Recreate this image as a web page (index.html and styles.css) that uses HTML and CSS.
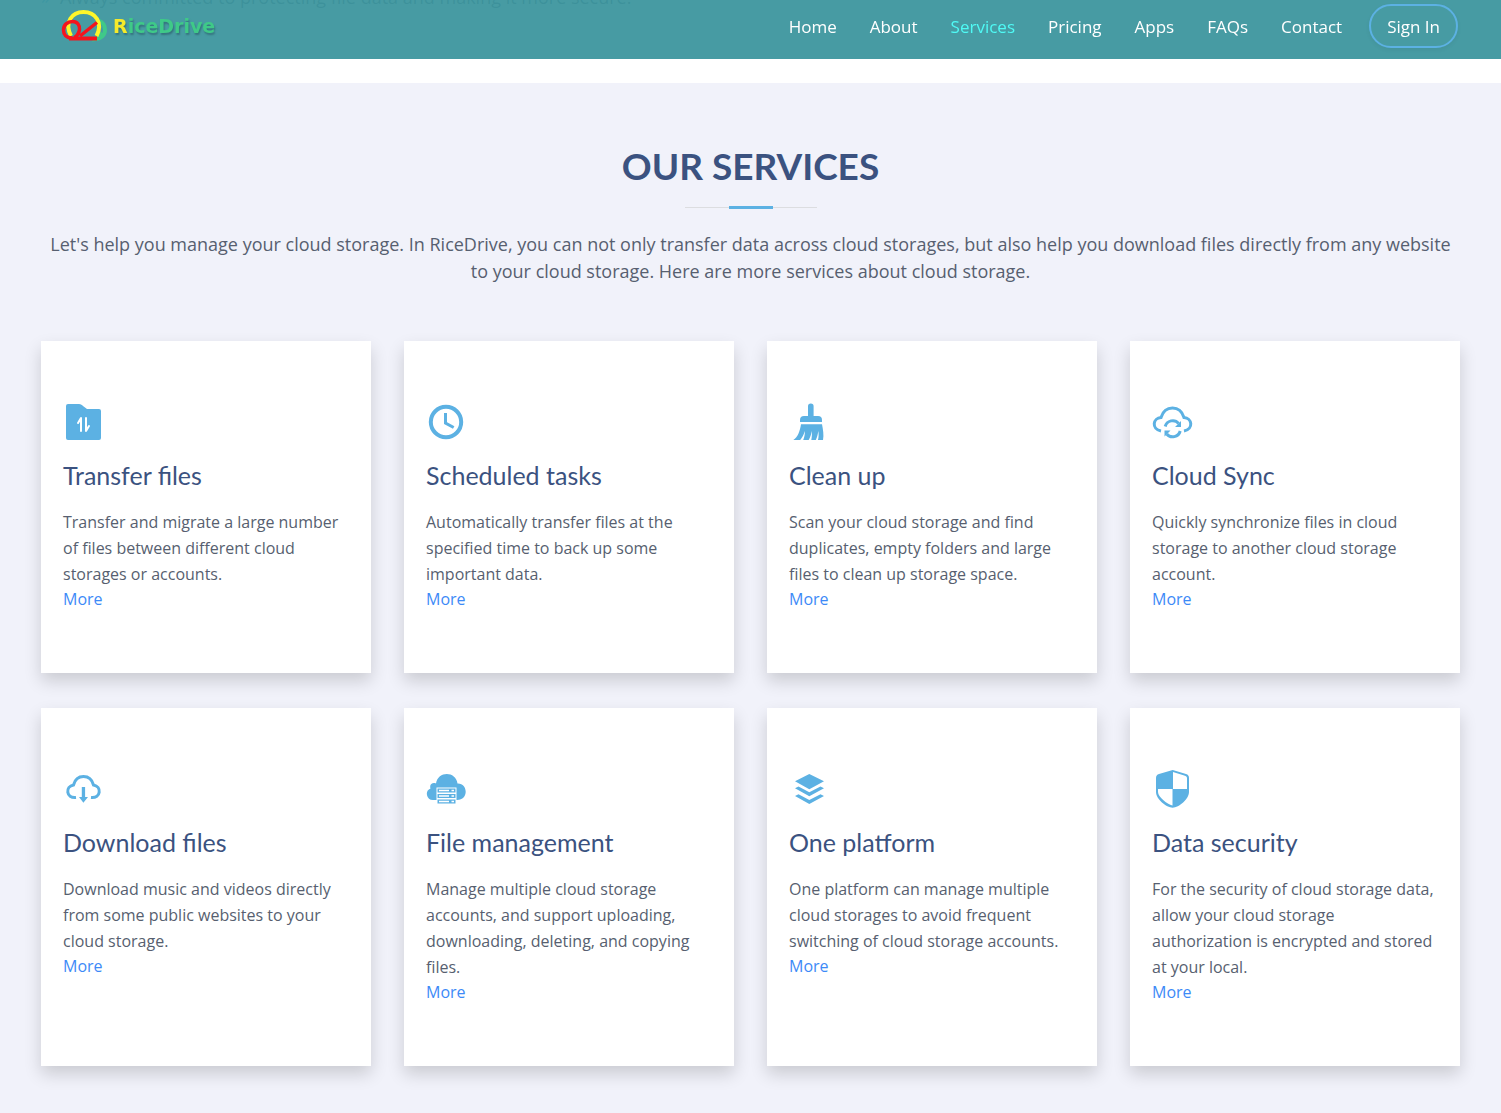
FILE: index.html
```html
<!DOCTYPE html>
<html lang="en">
<head>
<meta charset="utf-8">
<title>RiceDrive - Our Services</title>
<link rel="stylesheet" href="styles.css">
</head>
<body>
<header class="header">
  <a class="logo" href="#home">
    <svg class="logo-mark" viewBox="0 0 48 34" aria-hidden="true">
      <path d="M39 12c4 1 6 5 6 9 0 5-4 8.500-9 9l5-7" fill="none" stroke="#3fc988" stroke-width="4"/>
      <path d="M11 27C4 13 12 3 23.500 3s20 10 13 24" fill="none" stroke="#fff62a" stroke-width="4"/>
      <path d="M12 29C6 29 3.500 25 3.500 21c0-5 4-8.500 9-8.500s7.500 4 7 8c-.5 4-2 6-5 8M37 13.500 20 27" fill="none" stroke="#f5141d" stroke-width="3.500"/>
      <path d="M9 29.500h28" stroke="#f5141d" stroke-width="4"/>
    </svg>
    <span class="logo-text"><span class="logo-initial">R</span>iceDrive</span>
  </a>
  <nav class="nav">
    <a href="#home">Home</a>
    <a href="#about">About</a>
    <a class="active" href="#services">Services</a>
    <a href="#pricing">Pricing</a>
    <a href="#apps">Apps</a>
    <a href="#faqs">FAQs</a>
    <a href="#contact">Contact</a>
    <button class="sign-in" type="button">Sign In</button>
  </nav>
</header>

<section class="about">
  <ul class="about-list">
    <li>Always committed to protecting file data and making it more secure.</li>
  </ul>
</section>

<main class="services" id="services">
  <h1 class="heading">OUR SERVICES</h1>
  <div class="divider"></div>
  <p class="intro">Let's help you manage your cloud storage. In RiceDrive, you can not only transfer data across cloud storages, but also help you download files directly from any website to your cloud storage. Here are more services about cloud storage.</p>

  <div class="grid">
    <article class="card">
      <svg class="icon" viewBox="0 0 44 44" aria-hidden="true">
        <path d="M5 4h11c2 0 3 1 4 2l4 3h12a2 2 0 0 1 2 2v27a2 2 0 0 1-2 2H5a2 2 0 0 1-2-2V6a2 2 0 0 1 2-2z"/>
        <path class="cut" d="M18 31V18l-3 5M23 18v13l3-5"/>
      </svg>
      <h2>Transfer files</h2>
      <p>Transfer and migrate a large number of files between different cloud storages or accounts.</p>
      <a href="#transfer">More</a>
    </article>
    <article class="card">
      <svg class="icon" viewBox="0 0 44 44" aria-hidden="true">
        <circle class="line" cx="20" cy="22" r="15.2"/>
        <path class="line thin" d="M19.500 13v10l8.200 4.500"/>
      </svg>
      <h2>Scheduled tasks</h2>
      <p>Automatically transfer files at the specified time to back up some important data.</p>
      <a href="#scheduled">More</a>
    </article>
    <article class="card">
      <svg class="icon" viewBox="0 0 44 44" aria-hidden="true">
        <path d="M19 16V6.300a2.800 2.800 0 0 1 5.600 0V16H29a4 4 0 0 1 4 4v2H11v-2a4 4 0 0 1 4-4z"/>
        <path d="M12 24.300h21c1 5 2 11 1 15.700h-5c.8-3 .8-6 .3-9-.6 4-1.200 6-2.500 9h-4.500c.6-3 .8-6 .4-9-.6 4-1.500 6.500-3 9h-5.500c1.300-3 1.800-6 1.600-9-1.100 4-2.500 6.500-4.600 9H4.300C9 37 11 31 12 24.300z"/>
      </svg>
      <h2>Clean up</h2>
      <p>Scan your cloud storage and find duplicates, empty folders and large files to clean up storage space.</p>
      <a href="#clean">More</a>
    </article>
    <article class="card">
      <svg class="icon" viewBox="0 0 44 44" aria-hidden="true">
        <path class="line medium" d="M9 31C-1 29 1 18 9 17.500 11 11 15 8 20.500 8S30 11 32 17.500C40 18 42 29 32 31"/>
        <path class="line thin" d="M13.200 26.500a7.800 7.800 0 0 1 13.500-3M28.200 31a7.800 7.800 0 0 1-13.500 3"/>
        <path d="M29 21v6h-6zM12.500 36.500v-6h6z"/>
      </svg>
      <h2>Cloud Sync</h2>
      <p>Quickly synchronize files in cloud storage to another cloud storage account.</p>
      <a href="#sync">More</a>
    </article>
    <article class="card">
      <svg class="icon" viewBox="0 0 44 44" aria-hidden="true">
        <path class="line medium" d="M13 30.500c-10 1-11-11-2.500-12.500C12 12.500 15.500 9.600 20.500 9.600S29 12.500 30.500 18C39 19.500 38 31.500 28 30.500"/>
        <path d="M18.800 20h3.300v10H25l-4.600 5.800L16 30h2.800z"/>
      </svg>
      <h2>Download files</h2>
      <p>Download music and videos directly from some public websites to your cloud storage.</p>
      <a href="#download">More</a>
    </article>
    <article class="card">
      <svg class="icon" viewBox="0 0 44 44" aria-hidden="true">
        <path d="M7 33a6 6 0 0 1-2.500-11.500C3 17 7 15 10 16.500c2-13 20-12.500 21.500 0C42 16 43 33 31 33z"/>
        <path fill="#fff" d="M10.500 20.500h20V37h-20z"/>
        <path d="M11.500 21.500h18v4h-18zM11.500 27h18v4h-18zM11.500 32.500h18v4h-18z"/>
        <path fill="none" stroke="#fff" stroke-width="1.300" d="M13 23.500h10M25.500 23.500h2.500M13 29h10M25.500 29h2.500M13 34.500h10M25.500 34.500h2.500"/>
      </svg>
      <h2>File management</h2>
      <p>Manage multiple cloud storage accounts, and support uploading, downloading, deleting, and copying files.</p>
      <a href="#manage">More</a>
    </article>
    <article class="card">
      <svg class="icon" viewBox="0 0 44 44" aria-hidden="true">
        <path d="M20.300 7 35 14.300l-14.700 7.900L6 14.300zM6 21.200l3.500-1.700 10.800 5.700 11.200-5.700 3.500 1.700-14.700 8zM6 28.900l3.500-1.700 10.800 5.700 11.200-5.700 3.500 1.700-14.700 8z"/>
      </svg>
      <h2>One platform</h2>
      <p>One platform can manage multiple cloud storages to avoid frequent switching of cloud storage accounts.</p>
      <a href="#platform">More</a>
    </article>
    <article class="card">
      <svg class="icon" viewBox="0 0 44 44" aria-hidden="true">
        <path d="M20.700 3 34 7c2 .6 3 2 3 4v14c0 7-10 15.700-16.300 15.700S4 32 4 25V11c0-2 1-3.400 3-4z"/>
        <path fill="#fff" d="M21 5l12 3.700c1.500.5 2 1.300 2 2.800V22H21zM6 22h14.500v16.500C15 37 6 30 6 25z"/>
      </svg>
      <h2>Data security</h2>
      <p>For the security of cloud storage data, allow your cloud storage authorization is encrypted and stored at your local.</p>
      <a href="#security">More</a>
    </article>
  </div>
</main>
</body>
</html>
```
FILE: styles.css
```css
* { box-sizing: border-box; }

body {
  margin: 0;
  background: #f1f2fa;
  color: #575f70;
  font-family: "Open Sans", "Noto Sans", sans-serif;
  font-size: 16px;
}

a { text-decoration: none; }

.header {
  position: fixed;
  top: 0;
  left: 0;
  right: 0;
  z-index: 10;
  display: flex;
  justify-content: space-between;
  align-items: flex-start;
  height: 59px;
  padding: 4px 43px 0 60px;
  background: rgba(60, 149, 157, 0.94);
}

.logo { display: flex; align-items: center; gap: 5px; height: 44px; }
.logo-mark { width: 48px; height: 34px; }
.logo-text {
  color: #3fc988;
  font: bold 19px "DejaVu Sans", sans-serif;
  text-shadow: 1px 2px 2px #34737d;
}
.logo-initial { color: #f5ea2a; }

.nav { display: flex; align-items: center; gap: 33px; }
.nav a { color: #fff; font-size: 17px; font-weight: 500; }
.nav a.active { color: #4ffaf5; }

.sign-in {
  height: 44px;
  margin-left: -6px;
  padding: 0 16px;
  border: 2px solid #5cb1e3;
  border-radius: 22px;
  background: transparent;
  box-shadow: 0 2px 4px rgba(0, 0, 0, 0.06);
  color: #fff;
  font-family: inherit;
  font-size: 17px;
}

.about {
  display: flex;
  align-items: flex-end;
  height: 83px;
  padding: 0 41px 73px;
  background: #fff;
}
.about-list { margin: 0; padding: 0; list-style: none; font-size: 18px; line-height: 26px; }
.about-list li::before { content: "»"; margin-right: 10px; color: #5cb1e3; }

.services { padding: 60px 41px 47px; text-align: center; }

.heading {
  margin: 0;
  color: #3b5280;
  font: bold 37px/46px Lato, sans-serif;
}

.divider {
  width: 132px;
  height: 3px;
  margin: 17px auto 22px;
  background:
    linear-gradient(#5cb1e3, #5cb1e3) center / 44px 3px no-repeat,
    linear-gradient(#dcdde0, #dcdde0) center / 132px 1px no-repeat;
}

.intro { margin: 0 0 56px; font-size: 18px; line-height: 27px; }

.grid {
  display: grid;
  grid-template-columns: repeat(4, 1fr);
  gap: 35px 33px;
  text-align: left;
}

.card {
  padding: 59px 22px 62px;
  background: #fff;
  box-shadow: 0 8px 16px rgba(0, 0, 0, 0.16);
}

.icon { display: block; width: 44px; height: 44px; fill: #5cb1e3; }
.icon .line { fill: none; stroke: #5cb1e3; stroke-width: 4; }
.icon .medium { stroke-width: 3; }
.icon .thin { stroke-width: 3; }
.icon .cut { fill: none; stroke: #fff; stroke-width: 2; stroke-linecap: round; stroke-linejoin: round; }

.card h2 {
  margin: 14px 0 17px;
  color: #3b5280;
  font: 400 25px/34px Lato, sans-serif;
}

.card p { margin: 0; line-height: 26px; }
.card a { display: block; color: #3d8af7; line-height: 24px; }
```
